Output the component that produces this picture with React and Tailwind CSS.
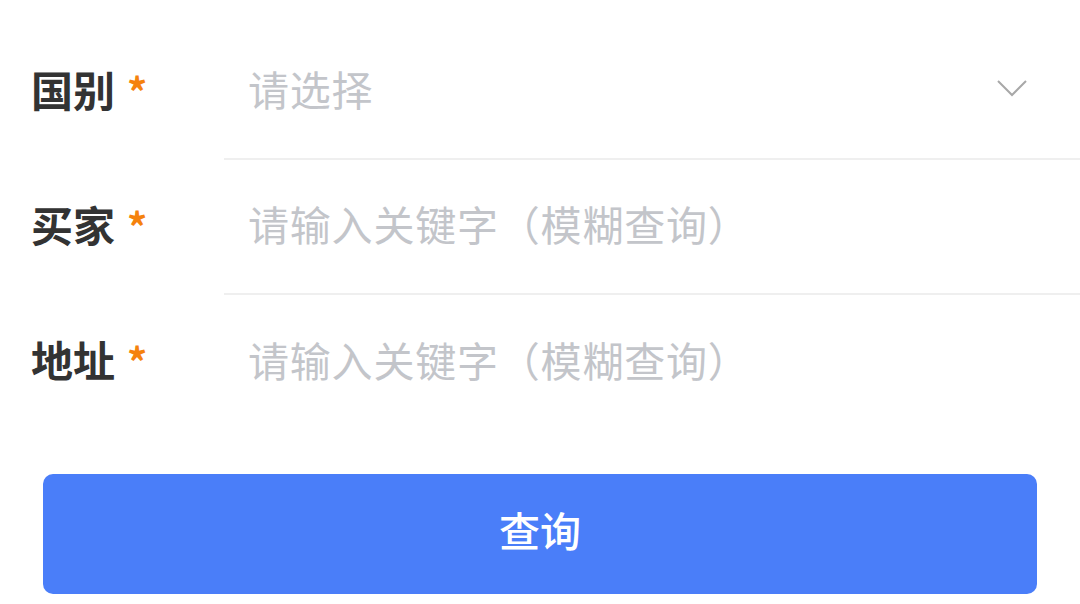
import React from "react";

const font = { fontFamily: '"Noto Sans CJK SC", "Noto Sans", sans-serif' };

function Row({ label, placeholder, select, last }) {
  return (
    <div className="flex h-[135px]">
      <div className="w-[224px] shrink-0 flex items-center pl-[31px] pb-[8px]">
        <span className="text-[42px] font-bold text-[#333333] leading-none">{label}</span>
        <span className="text-[40px] font-bold text-[#f5820d] leading-none ml-[12px] mt-[4px]">*</span>
      </div>
      <div className={`flex-1 flex items-center pl-[24px] pr-[52px] pb-[6px] ${last ? "" : "border-b-2 border-[#efefef]"}`}>
        <span className="flex-1 text-[41px] tracking-[0.8px] text-[#c3c5ca] leading-none">{placeholder}</span>
        {select && (
          <svg width="32" height="20" viewBox="0 0 32 20" className="shrink-0 mb-[2px]">
            <path d="M2 3 L16 17 L30 3" fill="none" stroke="#a8a8a8" strokeWidth="2" />
          </svg>
        )}
      </div>
    </div>
  );
}

export default function App() {
  return (
    <div className="w-[1080px] h-[604px] bg-white overflow-hidden" style={font}>
      <div className="pt-[25px]">
        <Row label="国别" placeholder="请选择" select />
        <Row label="买家" placeholder="请输入关键字（模糊查询）" />
        <Row label="地址" placeholder="请输入关键字（模糊查询）" last />
      </div>
      <div className="px-[43px] pt-[44px]">
        <button className="w-[994px] h-[120px] rounded-[10px] bg-[#4a7ef9] text-white text-[41px] font-medium flex items-center justify-center pb-[8px]">
          查询
        </button>
      </div>
    </div>
  );
}
